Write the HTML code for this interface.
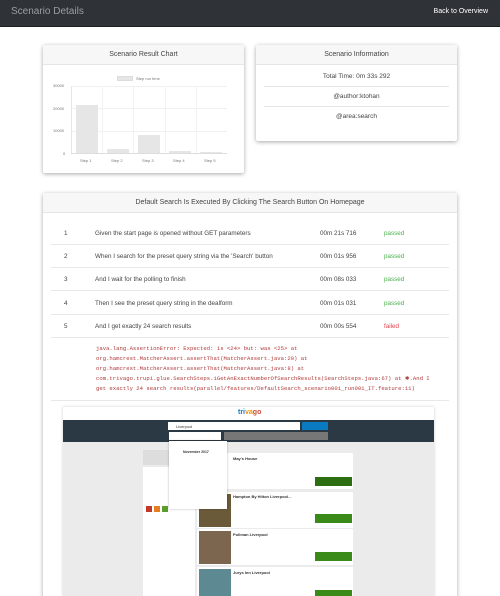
<!DOCTYPE html>
<html style="height:596px;overflow:hidden"><head><meta charset="utf-8"><style>
*{box-sizing:border-box;margin:0;padding:0}
body{width:500px;height:596px;overflow:hidden;background:#fff;font-family:"Liberation Sans",sans-serif;position:relative;color:#333}
.a{position:absolute}
.hdr{left:0;top:0;width:500px;height:27px;background:#2f3338;border-bottom:1px solid #1c1f22}
.card{background:#fff;box-shadow:0 1px 4px rgba(0,0,0,.35);border-radius:2px;overflow:hidden}
.ch{height:20px;background:#f7f7f7;border-bottom:1px solid #e6e6e6;font-size:7px;text-align:center;line-height:20px;color:#444}
.t{font-size:6.3px;color:#444;white-space:nowrap}
.ax{font-size:4px;color:#777}
.sep{height:1px;background:#e8e8e8}
.err{font-family:"Liberation Mono",monospace;font-size:5.6px;color:#b03a3a;line-height:10px;white-space:nowrap}
</style></head><body>
<div class="a hdr"></div>
<div class="a" style="left:11px;top:6px;font-size:10px;color:#9a9da1">Scenario Details</div>
<div class="a" style="right:12px;top:8px;font-size:7px;color:#fff">Back to Overview</div>

<div class="a card" style="left:43px;top:45px;width:201px;height:128px">
<div class="ch">Scenario Result Chart</div>
</div>
<div class="a" style="left:117px;top:76px;width:16px;height:5px;background:#e6e6e6;border:1px solid #ddd"></div>
<div class="a ax" style="left:136px;top:76px">Step run time</div>
<div class="a ax" style="left:53px;top:83px">30000</div>
<div class="a ax" style="left:53px;top:106px">20000</div>
<div class="a ax" style="left:53px;top:128px">10000</div>
<div class="a ax" style="left:63px;top:151px">0</div>
<div class="a" style="left:71px;top:86px;width:156px;height:1px;background:#f0f0f0"></div>
<div class="a" style="left:71px;top:108px;width:156px;height:1px;background:#f0f0f0"></div>
<div class="a" style="left:71px;top:131px;width:156px;height:1px;background:#f0f0f0"></div>
<div class="a" style="left:71px;top:86px;width:1px;height:68px;background:#e6e6e6"></div>
<div class="a" style="left:102px;top:86px;width:1px;height:68px;background:#f2f2f2"></div>
<div class="a" style="left:133px;top:86px;width:1px;height:68px;background:#f2f2f2"></div>
<div class="a" style="left:165px;top:86px;width:1px;height:68px;background:#f2f2f2"></div>
<div class="a" style="left:196px;top:86px;width:1px;height:68px;background:#f2f2f2"></div>
<div class="a" style="left:71px;top:153px;width:156px;height:1px;background:#ddd"></div>
<div class="a" style="left:76px;top:105px;width:22px;height:48px;background:#e6e6e6"></div>
<div class="a" style="left:107px;top:149px;width:22px;height:4px;background:#e6e6e6"></div>
<div class="a" style="left:138px;top:135px;width:22px;height:18px;background:#e6e6e6"></div>
<div class="a" style="left:169px;top:151px;width:22px;height:2px;background:#e6e6e6"></div>
<div class="a" style="left:200px;top:152px;width:22px;height:1px;background:#e6e6e6"></div>
<div class="a ax" style="left:80px;top:158px">Step 1</div>
<div class="a ax" style="left:111px;top:158px">Step 2</div>
<div class="a ax" style="left:142px;top:158px">Step 3</div>
<div class="a ax" style="left:173px;top:158px">Step 4</div>
<div class="a ax" style="left:204px;top:158px">Step 5</div>

<div class="a card" style="left:256px;top:45px;width:201px;height:96px">
<div class="ch">Scenario Information</div>
<div style="font-size:6.5px;text-align:center;color:#444">
<div style="height:20px;line-height:20px;margin:0 8px;border-bottom:1px solid #e6e6e6;margin-top:2px">Total Time: 0m 33s 292</div>
<div style="height:20px;line-height:20px;margin:0 8px;border-bottom:1px solid #e6e6e6">@author:ktohan</div>
<div style="height:20px;line-height:20px;margin:0 8px">@area:search</div>
</div>
</div>

<div class="a card" style="left:43px;top:193px;width:414px;height:415px">
<div class="ch">Default Search Is Executed By Clicking The Search Button On Homepage</div>
</div>
<div class="a t" style="left:64px;top:230px">1</div><div class="a t" style="left:95px;top:230px">Given the start page is opened without GET parameters</div><div class="a t" style="left:320px;top:230px">00m 21s 716</div><div class="a t" style="left:384px;top:230px;color:#4caf50">passed</div>
<div class="a sep" style="left:51px;top:244px;width:398px"></div>
<div class="a t" style="left:64px;top:253px">2</div><div class="a t" style="left:95px;top:253px">When I search for the preset query string via the 'Search' button</div><div class="a t" style="left:320px;top:253px">00m 01s 956</div><div class="a t" style="left:384px;top:253px;color:#4caf50">passed</div>
<div class="a sep" style="left:51px;top:267px;width:398px"></div>
<div class="a t" style="left:64px;top:276px">3</div><div class="a t" style="left:95px;top:276px">And I wait for the polling to finish</div><div class="a t" style="left:320px;top:276px">00m 08s 033</div><div class="a t" style="left:384px;top:276px;color:#4caf50">passed</div>
<div class="a sep" style="left:51px;top:290px;width:398px"></div>
<div class="a t" style="left:64px;top:300px">4</div><div class="a t" style="left:95px;top:300px">Then I see the preset query string in the dealform</div><div class="a t" style="left:320px;top:300px">00m 01s 031</div><div class="a t" style="left:384px;top:300px;color:#4caf50">passed</div>
<div class="a sep" style="left:51px;top:314px;width:398px"></div>
<div class="a t" style="left:64px;top:323px">5</div><div class="a t" style="left:95px;top:323px">And I get exactly 24 search results</div><div class="a t" style="left:320px;top:323px">00m 00s 554</div><div class="a t" style="left:384px;top:323px;color:#e0454d">failed</div>
<div class="a sep" style="left:51px;top:337px;width:398px"></div>
<div class="a err" style="left:96px;top:344px"> java.lang.AssertionError: Expected: is &lt;24&gt; but: was &lt;25&gt; at<br>org.hamcrest.MatcherAssert.assertThat(MatcherAssert.java:20) at<br>org.hamcrest.MatcherAssert.assertThat(MatcherAssert.java:8) at<br>com.trivago.trupi.glue.SearchSteps.iGetAnExactNumberOfSearchResults(SearchSteps.java:67) at ✱.And I<br>get exactly 24 search results(parallel/features/DefaultSearch_scenario001_run001_IT.feature:11)</div>
<div class="a sep" style="left:51px;top:400px;width:398px"></div>

<div class="a" style="left:63px;top:407px;width:371px;height:189px;background:#ebebeb;box-shadow:0 0 3px rgba(0,0,0,.2);overflow:hidden">
 <div class="a" style="left:0;top:0;width:371px;height:13px;background:#fff"></div>
 <div class="a" style="left:175px;top:2px;font-size:7px;font-weight:bold;color:#0a7bc1">tri<span style="color:#f48f00">va</span><span style="color:#c94a38">go</span></div>
 <div class="a" style="left:0;top:13px;width:371px;height:22px;background:#2a3944"></div>
 <div class="a" style="left:105px;top:15px;width:132px;height:8px;background:#fff;font-size:4px;padding:2px 8px;color:#333">Liverpool</div>
 <div class="a" style="left:239px;top:15px;width:26px;height:8px;background:#0a7bc1"></div>
 <div class="a" style="left:106px;top:25px;width:52px;height:8px;background:#fff"></div>
 <div class="a" style="left:161px;top:25px;width:52px;height:8px;background:#777"></div>
 <div class="a" style="left:213px;top:25px;width:52px;height:8px;background:#777"></div>
 <div class="a" style="left:80px;top:43px;width:52px;height:15px;background:#ddd"></div>
 <div class="a" style="left:80px;top:60px;width:52px;height:130px;background:#fff"></div>
 <div class="a" style="left:83px;top:99px;width:6px;height:6px;background:#c0392b"></div>
 <div class="a" style="left:91px;top:99px;width:6px;height:6px;background:#e67e22"></div>
 <div class="a" style="left:99px;top:99px;width:6px;height:6px;background:#5a9e2f"></div>
 <div class="a" style="left:134px;top:46px;width:156px;height:36px;background:#fff"></div>
 <div class="a" style="left:134px;top:85px;width:156px;height:36px;background:#fff"></div>
 <div class="a" style="left:134px;top:122px;width:156px;height:36px;background:#fff"></div>
 <div class="a" style="left:134px;top:160px;width:156px;height:36px;background:#fff"></div>
 <div class="a" style="left:136px;top:87px;width:32px;height:33px;background:#6b5a3a"></div>
 <div class="a" style="left:136px;top:124px;width:32px;height:33px;background:#7d6650"></div>
 <div class="a" style="left:136px;top:162px;width:32px;height:33px;background:#5d8a92"></div>
 <div class="a" style="left:252px;top:70px;width:37px;height:9px;background:#2d6e12"></div>
 <div class="a" style="left:252px;top:107px;width:37px;height:9px;background:#3a8a1a"></div>
 <div class="a" style="left:252px;top:145px;width:37px;height:9px;background:#3a8a1a"></div>
 <div class="a" style="left:252px;top:183px;width:37px;height:9px;background:#3a8a1a"></div>
 <div class="a" style="left:170px;top:49px;font-size:4px;font-weight:bold">May's House</div>
 <div class="a" style="left:170px;top:87px;font-size:4px;font-weight:bold">Hampton By Hilton Liverpool...</div>
 <div class="a" style="left:170px;top:125px;font-size:4px;font-weight:bold">Pullman Liverpool</div>
 <div class="a" style="left:170px;top:163px;font-size:4px;font-weight:bold">Jurys Inn Liverpool</div>
 <div class="a" style="left:106px;top:34px;width:58px;height:68px;background:#fff;box-shadow:0 0 2px rgba(0,0,0,.3)"></div>
 <div class="a" style="left:120px;top:43px;font-size:3.5px;font-weight:bold">November 2017</div>
</div>
</body></html>
